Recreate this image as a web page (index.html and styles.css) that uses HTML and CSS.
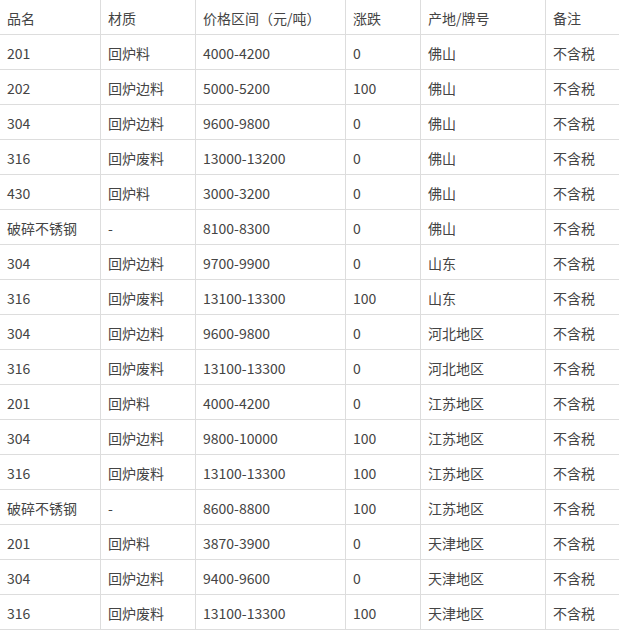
FILE: index.html
```html
<!DOCTYPE html>
<html>
<head>
<meta charset="utf-8">
<link rel="stylesheet" href="styles.css">
</head>
<body>
<table class="price-table">
<colgroup>
<col class="c1"><col class="c2"><col class="c3"><col class="c4"><col class="c5"><col class="c6">
</colgroup>
<tbody>
<tr><td>品名</td><td>材质</td><td>价格区间（元/吨）</td><td>涨跌</td><td>产地/牌号</td><td>备注</td></tr>
<tr><td>201</td><td>回炉料</td><td>4000-4200</td><td>0</td><td>佛山</td><td>不含税</td></tr>
<tr><td>202</td><td>回炉边料</td><td>5000-5200</td><td>100</td><td>佛山</td><td>不含税</td></tr>
<tr><td>304</td><td>回炉边料</td><td>9600-9800</td><td>0</td><td>佛山</td><td>不含税</td></tr>
<tr><td>316</td><td>回炉废料</td><td>13000-13200</td><td>0</td><td>佛山</td><td>不含税</td></tr>
<tr><td>430</td><td>回炉料</td><td>3000-3200</td><td>0</td><td>佛山</td><td>不含税</td></tr>
<tr><td>破碎不锈钢</td><td>-</td><td>8100-8300</td><td>0</td><td>佛山</td><td>不含税</td></tr>
<tr><td>304</td><td>回炉边料</td><td>9700-9900</td><td>0</td><td>山东</td><td>不含税</td></tr>
<tr><td>316</td><td>回炉废料</td><td>13100-13300</td><td>100</td><td>山东</td><td>不含税</td></tr>
<tr><td>304</td><td>回炉边料</td><td>9600-9800</td><td>0</td><td>河北地区</td><td>不含税</td></tr>
<tr><td>316</td><td>回炉废料</td><td>13100-13300</td><td>0</td><td>河北地区</td><td>不含税</td></tr>
<tr><td>201</td><td>回炉料</td><td>4000-4200</td><td>0</td><td>江苏地区</td><td>不含税</td></tr>
<tr><td>304</td><td>回炉边料</td><td>9800-10000</td><td>100</td><td>江苏地区</td><td>不含税</td></tr>
<tr><td>316</td><td>回炉废料</td><td>13100-13300</td><td>100</td><td>江苏地区</td><td>不含税</td></tr>
<tr><td>破碎不锈钢</td><td>-</td><td>8600-8800</td><td>100</td><td>江苏地区</td><td>不含税</td></tr>
<tr><td>201</td><td>回炉料</td><td>3870-3900</td><td>0</td><td>天津地区</td><td>不含税</td></tr>
<tr><td>304</td><td>回炉边料</td><td>9400-9600</td><td>0</td><td>天津地区</td><td>不含税</td></tr>
<tr><td>316</td><td>回炉废料</td><td>13100-13300</td><td>100</td><td>天津地区</td><td>不含税</td></tr>
</tbody>
</table>
</body>
</html>
```
FILE: styles.css
```css
html, body {
  margin: 0;
  padding: 0;
  background: #fff;
}
.price-table {
  border-collapse: collapse;
  table-layout: fixed;
  width: 622px;
  margin: -1px 0 0 -1px;
  font-family: "Noto Sans CJK SC", "Noto Sans", sans-serif;
  font-size: 14px;
  color: #444;
}
.c1 { width: 101px; }
.c2 { width: 95px; }
.c3 { width: 150px; }
.c4 { width: 75px; }
.c5 { width: 125px; }
.c6 { width: 76px; }
.price-table tr {
  height: 35px;
}
.price-table td {
  border: 1px solid #ddd;
  padding: 1px 0 0 7px;
  line-height: 20px;
  vertical-align: middle;
  white-space: nowrap;
  overflow: hidden;
}
```
